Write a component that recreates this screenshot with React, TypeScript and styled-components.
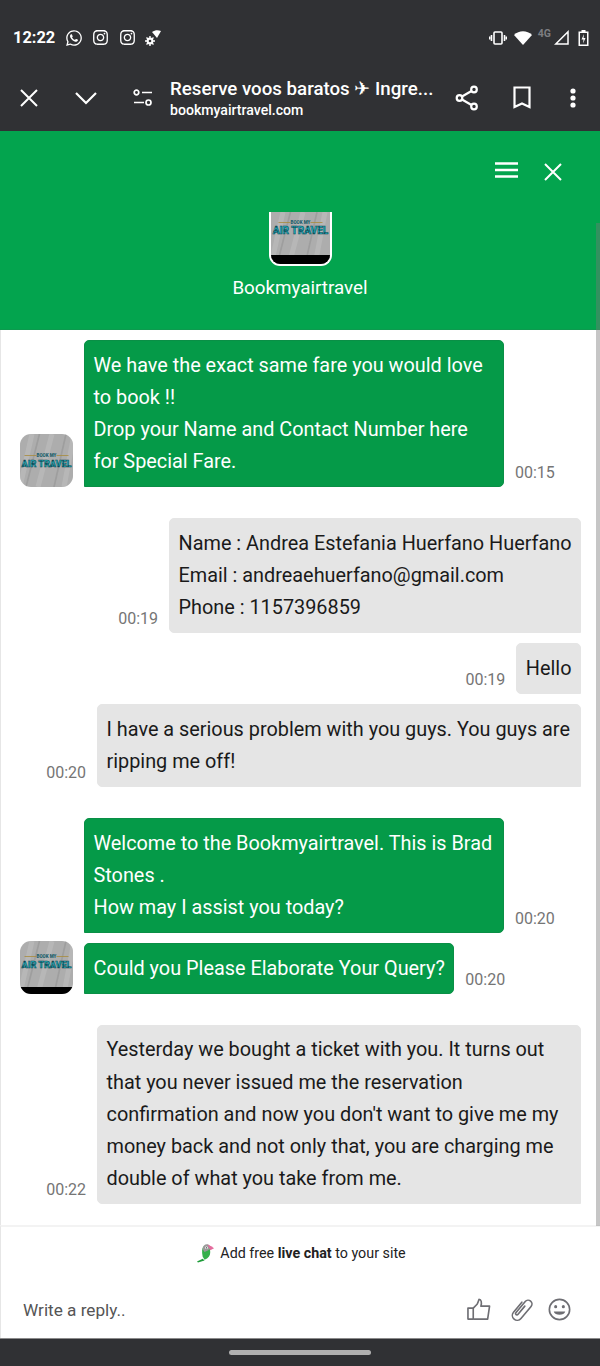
import React from 'react';
import styled, { createGlobalStyle } from 'styled-components';
import { FaWhatsapp, FaInstagram } from 'react-icons/fa';

const GlobalStyle = createGlobalStyle`
  html, body {
    margin: 0;
    padding: 0;
    background: #303134;
  }
  * { box-sizing: border-box; }
`;

const Page = styled.div`
  width: 600px;
  height: 1366px;
  position: relative;
  display: flex;
  flex-direction: column;
  overflow: hidden;
  background: #fff;
  font-family: Roboto, "Liberation Sans", sans-serif;
`;

const StatusBar = styled.div`
  height: 71px;
  flex: none;
  padding: 4px 11px 0 13px;
  display: flex;
  align-items: center;
  justify-content: space-between;
  background: #303134;
  color: #fff;
`;

const StatusGroup = styled.div`
  display: flex;
  align-items: center;
`;

const Clock = styled.span`
  font-size: 16.4px;
  font-weight: 700;
  margin-right: 10px;
`;

const StatusIcon = styled.span<{ $gap?: number }>`
  display: flex;
  margin-right: ${(p) => p.$gap ?? 0}px;
`;

const NetLabel = styled.span`
  font-size: 10.5px;
  font-weight: 700;
  color: #7d7e81;
  margin: -9px 3px 0 6px;
`;

const BrowserBar = styled.div`
  height: 60px;
  flex: none;
  display: flex;
  align-items: center;
  padding: 0 0 7px 19px;
  background: #303134;
  color: #fff;
`;

const BarButton = styled.span<{ $gap: number }>`
  display: flex;
  flex: none;
  margin-right: ${(p) => p.$gap}px;
`;

const TitleBlock = styled.div`
  width: 272px;
  flex: none;
  margin-right: 13px;
  padding-top: 2px;
`;

const PageTitle = styled.div`
  font-size: 18.7px;
  line-height: 23px;
  font-weight: 500;
  white-space: nowrap;
`;

const PageDomain = styled.div`
  font-size: 14.1px;
  line-height: 18px;
  font-weight: 500;
`;

const ChatHeader = styled.header`
  height: 199px;
  flex: none;
  display: flex;
  flex-direction: column;
  align-items: center;
  background: #03a44e;
  color: #fff;
  border-bottom: 1px solid #0c9a4e;
`;

const HeaderActions = styled.div`
  align-self: stretch;
  height: 81px;
  flex: none;
  padding: 31px 37px 0 0;
  display: flex;
  justify-content: flex-end;
  align-items: flex-start;
  gap: 25px;
`;

const HeaderLogo = styled.div`
  width: 63px;
  height: 54px;
  flex: none;
  border: 2px solid #fff;
  border-top: none;
  border-radius: 0 0 11px 11px;
  overflow: hidden;
  background: #000;
`;

const HeaderName = styled.div`
  margin-top: 10px;
  font-size: 18.8px;
  line-height: 24px;
`;

const ChatArea = styled.main`
  flex: 1;
  min-height: 0;
  padding: 10px 19px 0 20px;
  display: flex;
  flex-direction: column;
  gap: 31px;
  border-left: 1px solid #e6e6e6;
`;

const ScrollTrack = styled.div`
  position: absolute;
  top: 223px;
  right: 0;
  width: 4px;
  height: 1003px;
  background: rgba(120, 120, 120, 0.42);
`;

const Group = styled.div`
  display: flex;
  flex-direction: column;
  gap: 10px;
`;

const Row = styled.div<{ $side: 'agent' | 'visitor' }>`
  display: flex;
  align-items: flex-end;
  justify-content: ${(p) => (p.$side === 'visitor' ? 'flex-end' : 'flex-start')};
  gap: 11px;
`;

const Avatar = styled.div`
  width: 53px;
  height: 53px;
  flex: none;
  margin: -4px 0 0 -1px;
  border-radius: 11px;
  overflow: hidden;
`;

const AvatarSpacer = styled.div`
  width: 52px;
  flex: none;
`;

const Bubble = styled.div<{ $side: 'agent' | 'visitor' }>`
  padding: 8.5px 8.5px 8px;
  font-size: 19.85px;
  line-height: 32.2px;
  border-radius: ${(p) => (p.$side === 'agent' ? '5px 5px 5px 0' : '5px 5px 0 5px')};
  background: ${(p) => (p.$side === 'agent' ? '#059a48' : '#e5e5e5')};
  color: ${(p) => (p.$side === 'agent' ? '#fff' : '#1a1a1a')};
  border: 1px solid ${(p) => (p.$side === 'agent' ? '#0a8f46' : '#e5e5e5')};
  max-width: ${(p) => (p.$side === 'agent' ? '420px' : '484px')};
`;

const Time = styled.span`
  flex: none;
  margin-bottom: 4px;
  font-size: 16px;
  line-height: 20px;
  color: #757575;
`;

const Footer = styled.footer`
  height: 113px;
  flex: none;
  border-top: 2px solid #f3f3f3;
  border-left: 1px solid #e6e6e6;
  display: flex;
  flex-direction: column;
`;

const Promo = styled.div`
  height: 52px;
  flex: none;
  display: flex;
  align-items: center;
  justify-content: center;
  gap: 5px;
  font-size: 14.3px;
  color: #222;
  padding-left: 2px;

  b {
    font-weight: 700;
  }
`;

const Composer = styled.div`
  flex: 1;
  padding: 2px 29px 0 22px;
  display: flex;
  align-items: center;
`;

const Placeholder = styled.span`
  flex: 1;
  font-size: 17.2px;
  color: #555;
`;

const ComposerIcons = styled.div`
  display: flex;
  align-items: center;
  gap: 16px;
  color: #6e6e73;
`;

const ThumbIcon = styled.svg`
  margin-right: 3px;
`;

const ClipIcon = styled.svg`
  margin: 0 -2px;
`;

const NavBar = styled.div`
  height: 28px;
  flex: none;
  display: flex;
  justify-content: center;
  padding-top: 11px;
  background: #303134;
  border-top: 1px solid #8b8b8b;
`;

const NavHandle = styled.div`
  width: 142px;
  height: 5px;
  border-radius: 3px;
  background: #b0b0b0;
`;

type LogoProps = { bar?: boolean; wide?: boolean };

// grey brushed square with the teal wordmark
const LogoArt = ({ bar, wide }: LogoProps) => {
  const cx = wide ? 29.5 : 26.5;
  const top = wide ? 12 : bar ? 17 : 23;
  return (
    <svg width="100%" height="100%" viewBox={wide ? '0 0 59 52' : '0 0 53 53'} preserveAspectRatio="none" style={{ display: 'block' }}>
      <rect width="59" height="53" fill="#adadad" />
      <path d="M20 -2 L6 53 M46 0 L34 53" stroke="#8f8f8f" strokeWidth="1.6" opacity=".5" />
      <path d="M12 0 L0 53 M32 0 L18 53 M54 0 L44 53" stroke="#c4c4c4" strokeWidth="5" opacity=".45" />
      <path d={`M${cx - 22} ${top - 1.5} H${cx - 10} M${cx + 10} ${top - 1.5} H${cx + 22}`} stroke="#a88c3c" strokeWidth=".8" />
      <text x={cx} y={top} textAnchor="middle" fontFamily="Roboto, sans-serif" fontSize="4.5" fontWeight="900" fill="#1c5f6c">BOOK MY</text>
      <text x={cx} y={top + 9.5} textAnchor="middle" fontFamily="Roboto, sans-serif" fontSize={wide ? 10 : 9} fontWeight="900" fill="#1cb4c4" stroke="#0c3f4a" strokeWidth=".5">AIR TRAVEL</text>
      {bar && <rect y={wide ? 43 : 46} width="59" height="10" fill="#000" />}
    </svg>
  );
};

const CloseIcon = ({ size }: { size: number }) => (
  <svg width={size} height={size} viewBox="0 0 20 20" fill="none" stroke="#fff" strokeWidth="2">
    <path d="M2 2 L18 18 M18 2 L2 18" />
  </svg>
);

const ParrotIcon = () => (
  <svg width="18" height="20" viewBox="0 0 19 20">
    <path d="M6 14 C5 9 5 5 7 3 L13 2 L14 9 C14 13 12 16 8 17 Z" fill="#35b04a" />
    <path d="M6 6 C6 2 9 0 12 1 C14 2 14 5 12 7 L8 9 Z" fill="#9a9a9a" />
    <path d="M11 1 L15 3 L18 5 L14 7 Z" fill="#e46b9d" />
    <path d="M0 19 L6 16 L8 18 L1 20 Z" fill="#1f9c3a" />
    <circle cx="10" cy="4.5" r="1.4" fill="#fff" />
    <circle cx="10" cy="4.5" r=".7" fill="#222" />
  </svg>
);

const App: React.FC = () => {
  return (
    <Page>
      <GlobalStyle />
      <StatusBar>
        <StatusGroup>
          <Clock>12:22</Clock>
          <StatusIcon $gap={9}><FaWhatsapp size={18} /></StatusIcon>
          <StatusIcon $gap={10}><FaInstagram size={17} /></StatusIcon>
          <StatusIcon $gap={9}><FaInstagram size={17} /></StatusIcon>
          <StatusIcon>
            <svg width="17" height="16" viewBox="0 0 17 16" fill="#fff">
              <path d="M7 2 C10 0 13 0 16 1 L12 8 Z" />
              <circle cx="5" cy="11" r="3.4" />
              <path d="M5 6 V16 M0 11 H10 M1.5 7.5 L8.5 14.5 M8.5 7.5 L1.5 14.5" stroke="#fff" strokeWidth="1.4" />
              <circle cx="5" cy="11" r="1.3" fill="#303134" />
            </svg>
          </StatusIcon>
        </StatusGroup>
        <StatusGroup>
          <StatusIcon $gap={7}>
            <svg width="18" height="14" viewBox="0 0 18 14" fill="none" stroke="#fff" strokeWidth="1.6">
              <rect x="5" y="1" width="8" height="12" rx="1" />
              <path d="M2.5 4 V10 M15.5 4 V10 M.6 5.5 V8.5 M17.4 5.5 V8.5" />
            </svg>
          </StatusIcon>
          <StatusIcon>
            <svg width="18" height="14" viewBox="0 0 18 14" fill="#fff">
              <path d="M0 4 C5 -1 13 -1 18 4 L9 14 Z" />
            </svg>
          </StatusIcon>
          <NetLabel>4G</NetLabel>
          <StatusIcon $gap={9}>
            <svg width="15" height="15" viewBox="0 0 15 15" fill="none" stroke="#fff" strokeWidth="1.5">
              <path d="M14 1.8 V14 H1.8 Z" />
            </svg>
          </StatusIcon>
          <StatusIcon>
            <svg width="11" height="16" viewBox="0 0 11 16">
              <path d="M3.5 0 H7.5 V1.5 H10.5 V16 H.5 V1.5 H3.5 Z" fill="#fff" />
              <rect x="2" y="3" width="7" height="11.5" fill="#303134" />
              <path d="M6 4 L3.5 9.5 H5.5 L5 13.5 L7.5 8 H5.5 Z" fill="#fff" />
            </svg>
          </StatusIcon>
        </StatusGroup>
      </StatusBar>

      <BrowserBar>
        <BarButton $gap={35}><CloseIcon size={20} /></BarButton>
        <BarButton $gap={35}>
          <svg width="24" height="14" viewBox="0 0 24 14" fill="none" stroke="#fff" strokeWidth="2.2">
            <path d="M2 2 L12 12 L22 2" />
          </svg>
        </BarButton>
        <BarButton $gap={17}>
          <svg width="20" height="18" viewBox="0 0 20 18" fill="none" stroke="#fff" strokeWidth="1.7">
            <circle cx="3.5" cy="3.5" r="2.3" />
            <path d="M9 3.5 H19 M1 13.5 H11" />
            <circle cx="15.5" cy="13.5" r="2.5" />
          </svg>
        </BarButton>
        <TitleBlock>
          <PageTitle>Reserve voos baratos ✈ Ingre...</PageTitle>
          <PageDomain>bookmyairtravel.com</PageDomain>
        </TitleBlock>
        <BarButton $gap={34}>
          <svg width="24" height="26" viewBox="0 0 24 26" fill="none" stroke="#fff" strokeWidth="2.2">
            <circle cx="19" cy="4.5" r="2.8" />
            <circle cx="4.5" cy="13" r="2.8" />
            <circle cx="19" cy="21.5" r="2.8" />
            <path d="M7 11.5 L16.5 6 M7 14.5 L16.5 20" />
          </svg>
        </BarButton>
        <BarButton $gap={39}>
          <svg width="18" height="23" viewBox="0 0 18 23" fill="none" stroke="#fff" strokeWidth="2.2">
            <path d="M1.5 1.5 H16.5 V21 L9 17.5 L1.5 21 Z" />
          </svg>
        </BarButton>
        <BarButton $gap={0}>
          <svg width="6" height="20" viewBox="0 0 6 20" fill="#fff">
            <circle cx="3" cy="3" r="2.6" />
            <circle cx="3" cy="10" r="2.6" />
            <circle cx="3" cy="17" r="2.6" />
          </svg>
        </BarButton>
      </BrowserBar>

      <ChatHeader>
        <HeaderActions>
          <svg width="23" height="16" viewBox="0 0 23 16" fill="none" stroke="#fff" strokeWidth="2.4">
            <path d="M0 1.5 H23 M0 8 H23 M0 14.5 H23" />
          </svg>
          <CloseIcon size={20} />
        </HeaderActions>
        <HeaderLogo><LogoArt bar wide /></HeaderLogo>
        <HeaderName>Bookmyairtravel</HeaderName>
      </ChatHeader>

      <ChatArea>
        <Row $side="agent">
          <Avatar><LogoArt /></Avatar>
          <Bubble $side="agent">
            We have the exact same fare you would love to book !!
            <br />
            Drop your Name and Contact Number here for Special Fare.
          </Bubble>
          <Time>00:15</Time>
        </Row>

        <Group>
          <Row $side="visitor">
            <Time>00:19</Time>
            <Bubble $side="visitor">
              Name : Andrea Estefania Huerfano Huerfano
              <br />
              Email : andreaehuerfano@gmail.com
              <br />
              Phone : 1157396859
            </Bubble>
          </Row>
          <Row $side="visitor">
            <Time>00:19</Time>
            <Bubble $side="visitor">Hello</Bubble>
          </Row>
          <Row $side="visitor">
            <Time>00:20</Time>
            <Bubble $side="visitor">I have a serious problem with you guys. You guys are ripping me off!</Bubble>
          </Row>
        </Group>

        <Group>
          <Row $side="agent">
            <AvatarSpacer />
            <Bubble $side="agent">
              Welcome to the Bookmyairtravel. This is Brad Stones .
              <br />
              How may I assist you today?
            </Bubble>
            <Time>00:20</Time>
          </Row>
          <Row $side="agent">
            <Avatar><LogoArt bar /></Avatar>
            <Bubble $side="agent">Could you Please Elaborate Your Query?</Bubble>
            <Time>00:20</Time>
          </Row>
        </Group>

        <Row $side="visitor">
          <Time>00:22</Time>
          <Bubble $side="visitor">
            Yesterday we bought a ticket with you. It turns out that you never issued me the reservation confirmation and now you don't want to give me my money back and not only that, you are charging me double of what you take from me.
          </Bubble>
        </Row>
      </ChatArea>

      <Footer>
        <Promo>
          <ParrotIcon />
          <span>Add free <b>live chat</b> to your site</span>
        </Promo>
        <Composer>
          <Placeholder>Write a reply..</Placeholder>
          <ComposerIcons>
            <ThumbIcon width="24" height="23" viewBox="0 0 25 23" fill="none" stroke="currentColor" strokeWidth="1.7" strokeLinejoin="round">
              <path d="M1 10 H6.5 V21.5 H1 Z" />
              <path d="M6.5 10 L10.5 6 C11.5 4.5 12 2.5 12.5 1 C15 1 15.5 4 14.5 8 H23.5 L21.5 21.5 H6.5" />
            </ThumbIcon>
            <ClipIcon width="26" height="26" viewBox="0 0 24 24" fill="none" stroke="currentColor" strokeWidth="1.5" strokeLinecap="round">
              <path d="M8 7 V19 a4.5 4.5 0 0 0 9 0 V4.5 a3.5 3.5 0 0 0 -7 0 V18 a1.2 1.2 0 0 0 2.4 0 V8" transform="rotate(40 12 12) translate(0 -1)" />
            </ClipIcon>
            <svg width="23" height="23" viewBox="0 0 24 24" fill="none" stroke="currentColor" strokeWidth="1.7">
              <circle cx="12" cy="12" r="10.6" />
              <circle cx="8" cy="9" r="1.6" fill="currentColor" stroke="none" />
              <circle cx="16" cy="9" r="1.6" fill="currentColor" stroke="none" />
              <path d="M6 14 H18 C17 18.5 7 18.5 6 14 Z" fill="currentColor" stroke="none" />
            </svg>
          </ComposerIcons>
        </Composer>
      </Footer>

      <NavBar><NavHandle /></NavBar>
      <ScrollTrack />
    </Page>
  );
};

export default App;
